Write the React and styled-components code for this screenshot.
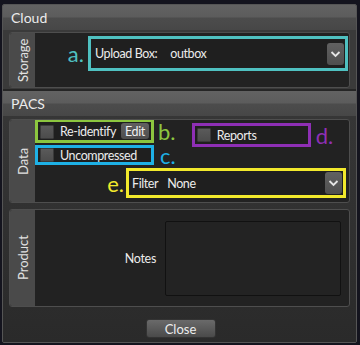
import React from 'react'
import styled, { createGlobalStyle } from 'styled-components'

const Global = createGlobalStyle`
  html, body { margin: 0; padding: 0; background: #14141e; }
  body { font-family: Lato, "Open Sans", sans-serif; }
`

const Page = styled.div`
  width: 360px;
  height: 345px;
  box-sizing: border-box;
  padding: 4px 3px 2px 2px;
  background: #14141e;
`

const Frame = styled.div`
  height: 100%;
  box-sizing: border-box;
  border: 1px solid #555;
  border-radius: 2px;
  display: flex;
  flex-direction: column;
  background: #2b2b2b;
  overflow: hidden;
`

const Header = styled.div`
  height: 25px;
  flex: none;
  display: flex;
  align-items: center;
  padding-left: 8px;
  color: #ececec;
  font-size: 14px;
  background: linear-gradient(#626262 0%, #5c5c5c 48%, #4c4c4c 52%, #474747 100%);
  border-top: ${p => (p.$sep ? '2px solid #252525' : 'none')};
`

const Body = styled.div`
  display: flex;
  flex-direction: column;
  gap: ${p => p.$gap || 0}px;
  padding: ${p => p.$pad};
  background: ${p => p.$bg};
  flex: ${p => (p.$grow ? 1 : 'none')};
`

const Section = styled.div`
  display: flex;
  height: ${p => p.$h}px;
  box-sizing: border-box;
  border: 1px solid #4e4e4e;
  border-radius: 3px;
  background: #222;
  overflow: hidden;
`

const Tab = styled.div`
  width: 25px;
  flex: none;
  background: #4a4a4a;
  display: flex;
  align-items: center;
  justify-content: center;
  color: #e2e2e2;
  font-size: 13px;
  writing-mode: vertical-rl;
  transform: rotate(180deg);
`

const Content = styled.div`
  flex: 1;
  display: flex;
  flex-direction: column;
  padding: ${p => p.$pad || 0};
`

const Row = styled.div`
  display: flex;
  align-items: ${p => p.$align || 'center'};
  justify-content: ${p => p.$justify || 'flex-start'};
  gap: ${p => p.$gap || 0}px;
  margin-top: ${p => p.$mt || 0}px;
  margin-left: ${p => p.$ml || 0}px;
`

const Mark = styled.span`
  color: ${p => p.$c};
  font-size: 22px;
  line-height: 17px;
  height: 17px;
  white-space: nowrap;
`

const Outline = styled.div`
  box-sizing: border-box;
  width: ${p => p.$w}px;
  height: ${p => p.$h}px;
  flex: none;
  border: 3px solid ${p => p.$c};
  display: flex;
  align-items: ${p => p.$align || 'center'};
  padding: ${p => p.$pad || '0 0 0 2px'};
  background: #1f1f1f;
  color: #ececec;
  font-size: 12.5px;
  letter-spacing: -0.4px;
  white-space: nowrap;
`

const Box = styled.span`
  width: 12px;
  height: 12px;
  flex: none;
  border-radius: 1px;
  background: linear-gradient(#5a5a5a, #4c4c4c);
  border: 1px solid #3a3a3a;
  margin-right: 6px;
`

const SmallBtn = styled.span`
  background: linear-gradient(#606060, #4e4e4e);
  border-radius: 3px;
  color: #f0f0f0;
  padding: 1px 4px 0;
  line-height: 15px;
  margin-left: 5px;
`

const Value = styled.span`
  flex: 1;
  margin-left: ${p => p.$ml}px;
`

const Arrow = styled.span`
  width: 17px;
  height: 22px;
  border-radius: 3px;
  background: linear-gradient(#616161, #4f4f4f);
  display: flex;
  align-items: center;
  justify-content: center;
  margin-right: 1px;
`

const NotesLabel = styled.span`
  color: #ececec;
  font-size: 12.5px;
  letter-spacing: -0.3px;
`

const NotesArea = styled.div`
  width: 176px;
  height: 75px;
  box-sizing: border-box;
  border: 1px solid #111;
  border-radius: 2px;
  background: #232323;
`

const Footer = styled.div`
  display: flex;
  justify-content: center;
  padding-top: 6px;
`

const CloseBtn = styled.button`
  width: 70px;
  height: 19px;
  padding: 0;
  border: 1px solid #333;
  border-radius: 3px;
  background: linear-gradient(#6a6a6a, #4a4a4a);
  color: #ededed;
  font-family: Lato, sans-serif;
  font-size: 13px;
  line-height: 16px;
  margin-left: 2px;
`

const Chevron = () => (
  <svg width="11" height="8" viewBox="0 0 11 8">
    <polyline points="1.5,2 5.5,6 9.5,2" fill="none" stroke="#e4e4e4" strokeWidth="1.8" />
  </svg>
)

export default function App() {
  return (
    <Page>
      <Global />
      <Frame>
        <Header>Cloud</Header>
        <Body $pad="2px 6px 1px 6px" $bg="#3a3a3a">
          <Section $h={56}>
            <Tab>Storage</Tab>
            <Content $pad="3px 1px 0 0">
              <Row $justify="flex-end" $gap={4}>
                <Mark $c="#4fc1c1">a.</Mark>
                <Outline $c="#4fc1c1" $w={260} $h={35} $pad="0 0 0 4px">
                  <span>Upload Box:</span>
                  <Value $ml={13}>outbox</Value>
                  <Arrow><Chevron /></Arrow>
                </Outline>
              </Row>
            </Content>
          </Section>
        </Body>
        <Header $sep>PACS</Header>
        <Body $pad="3px 6px 0 6px" $bg="linear-gradient(#363636, #2a2a2a)" $gap={6} $grow>
          <Section $h={84}>
            <Tab>Data</Tab>
            <Content>
              <Row $align="flex-start">
                <div>
                  <Row $gap={4} $mt={-1}>
                    <Outline $c="#8cc63f" $w={119} $h={24} $align="flex-end" $pad="0 0 1px 2px">
                      <Box />
                      <span>Re-identify</span>
                      <SmallBtn>Edit</SmallBtn>
                    </Outline>
                    <Mark $c="#8cc63f">b.</Mark>
                  </Row>
                  <Row $gap={6} $mt={2}>
                    <Outline $c="#1eb1e6" $w={119} $h={20}>
                      <Box />
                      <span>Uncompressed</span>
                    </Outline>
                    <Mark $c="#1eb1e6">c.</Mark>
                  </Row>
                </div>
                <Row $gap={5} $mt={3} $ml={16}>
                  <Outline $c="#8e2fb5" $w={119} $h={24}>
                    <Box />
                    <span>Reports</span>
                  </Outline>
                  <Mark $c="#8e2fb5">d.</Mark>
                </Row>
              </Row>
              <Row $justify="flex-end" $gap={2} $mt={3} style={{ paddingRight: 3 }}>
                <Mark $c="#f2e92c">e.</Mark>
                <Outline $c="#f2e92c" $w={220} $h={30} $pad="0 0 0 3px">
                  <span>Filter</span>
                  <Value $ml={9}>None</Value>
                  <Arrow><Chevron /></Arrow>
                </Outline>
              </Row>
            </Content>
          </Section>
          <Section $h={98}>
            <Tab>Product</Tab>
            <Content $pad="0 8px 0 0" style={{ justifyContent: 'center' }}>
              <Row $justify="flex-end" $gap={9}>
                <NotesLabel>Notes</NotesLabel>
                <NotesArea />
              </Row>
            </Content>
          </Section>
          <Footer>
            <CloseBtn>Close</CloseBtn>
          </Footer>
        </Body>
      </Frame>
    </Page>
  )
}
